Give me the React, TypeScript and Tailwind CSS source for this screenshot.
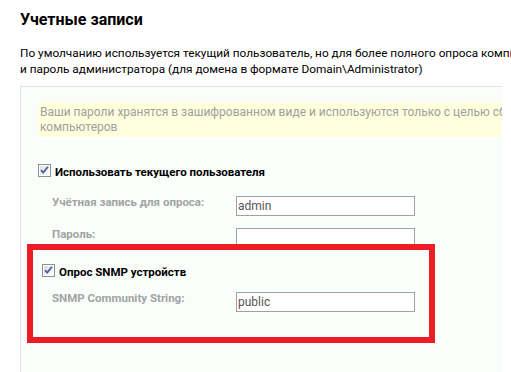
import React from "react";

function Check() {
  return (
    <svg width="13" height="13" viewBox="0 0 13 13" className="shrink-0">
      <defs>
        <linearGradient id="cbg" x1="0" y1="0" x2="1" y2="1">
          <stop offset="0" stopColor="#dcdcdc" />
          <stop offset="1" stopColor="#ffffff" />
        </linearGradient>
      </defs>
      <rect x="0.5" y="0.5" width="12" height="12" fill="#ffffff" stroke="#8f8f8f" />
      <rect x="2" y="2" width="9" height="9" fill="url(#cbg)" />
      <path d="M3 6.2 L5.2 8.6 L10 2.8" fill="none" stroke="#4b5fa3" strokeWidth="1.8" />
    </svg>
  );
}

function Field({ label, value }: { label: string; value?: string }) {
  return (
    <div className="flex items-start">
      <div className="w-[198px] -mt-[2px] pl-[14px] text-[11.5px] leading-[16px] font-bold text-[#a3a3a3] whitespace-nowrap">
        {label}
      </div>
      <div className="w-[179px] h-[20px] border border-[#a0a0a0] bg-white px-[1px] text-[12px] leading-[18px] text-[#555]">
        {value}
      </div>
    </div>
  );
}

export default function App() {
  return (
    <div
      className="w-[511px] h-[372px] overflow-hidden bg-white pl-[20px] pt-[8px] text-black"
      style={{ fontFamily: 'Roboto, "Open Sans", sans-serif' }}
    >
      <h1 className="text-[16px] leading-[24px] font-bold">Учетные записи</h1>
      <p className="mt-[13px] text-[11.8px] leading-[16px] whitespace-nowrap">
        По умолчанию используется текущий пользователь, но для более полного опроса компьютеров укажите логин
        <br />
        и пароль администратора (для домена в формате Domain\Administrator)
      </p>

      <div className="relative mt-[9px] w-[482px] border-t border-l border-[#e3e3e3] bg-[#f9fefb] pt-[15px] pl-[17px] pb-[70px] overflow-hidden">
        <div className="w-[520px] bg-[#ffffdd] pt-[3px] pb-[2px] pl-[2px] text-[12px] leading-[15px] text-[#a0a0a0] whitespace-nowrap">
          Ваши пароли хранятся в зашифрованном виде и используются только с целью сбора информации с
          <br />
          компьютеров
        </div>

        <div className="mt-[27px] flex items-start gap-[4px] text-[11.5px] leading-[16px] font-bold">
          <Check />
          <span>Использовать текущего пользователя</span>
        </div>

        <div className="mt-[16px] flex flex-col gap-[12px]">
          <Field label="Учётная запись для опроса:" value="admin" />
          <Field label="Пароль:" />
        </div>

        <div className="mt-[16px] ml-[4px] flex items-start gap-[4px] text-[11.5px] leading-[16px] font-bold">
          <Check />
          <span>Опрос SNMP устройств</span>
        </div>

        <div className="mt-[12px]">
          <Field label="SNMP Community String:" value="public" />
        </div>

        <div className="absolute left-[6px] top-[157px] w-[408px] h-[99px] border-[6px] border-[#ee1c25]" />
      </div>
    </div>
  );
}
